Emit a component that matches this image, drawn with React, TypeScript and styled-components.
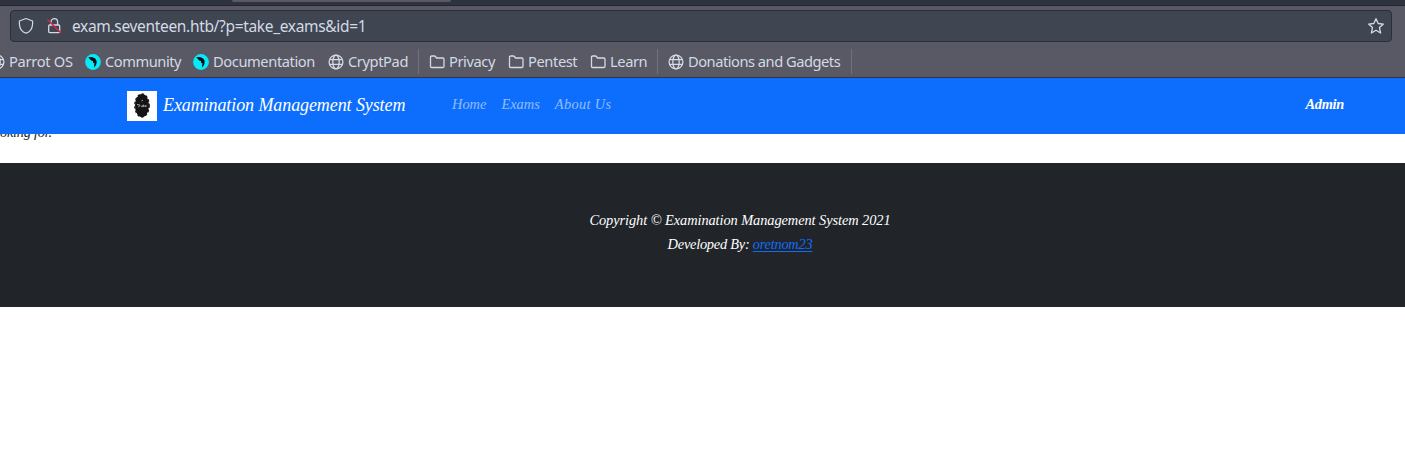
import React from "react";
import styled, { createGlobalStyle } from "styled-components";

const Global = createGlobalStyle`
  * { box-sizing: border-box; }
  html, body { margin: 0; background: #fff; overflow: hidden; }
`;

const Window = styled.div`
  display: flex;
  flex-direction: column;
  width: 1405px;
  height: 472px;
  overflow: hidden;
`;

const TabStrip = styled.div`
  flex: none;
  height: 6px;
  padding-left: 232px;
  background: #2f333f;
  border-bottom: 1px solid #22242e;
`;

const ActiveTab = styled.div`
  width: 219px;
  height: 2px;
  background: #585965;
  border-radius: 0 0 3px 3px;
`;

const Chrome = styled.div`
  flex: none;
  height: 72px;
  padding-top: 4px;
  background: #585965;
  border-bottom: 1px solid #32333e;
  color: #d3dae3;
  font-family: "Noto Sans", sans-serif;
`;

const AddressBar = styled.div`
  display: flex;
  align-items: center;
  height: 32px;
  margin: 0 13px 0 10px;
  padding: 0 6px 0 7px;
  background: #404552;
  border: 1px solid #2b2e39;
  border-radius: 4px;

  svg { flex: none; }
`;

const Url = styled.span`
  flex: 1;
  margin-left: 10px;
  font-size: 15.5px;
  line-height: 30px;
  letter-spacing: -0.33px;
`;

const Bookmarks = styled.div`
  display: flex;
  align-items: center;
  height: 35px;
  padding-top: 4px;
  margin-left: -11px;
`;

const Bookmark = styled.div<{ $width: number; $spacing?: number }>`
  display: flex;
  flex: none;
  align-items: center;
  gap: 4px;
  width: ${(p) => p.$width}px;
  font-size: 14.67px;
  line-height: 20px;
  letter-spacing: ${(p) => p.$spacing ?? -0.4}px;
  white-space: nowrap;

  svg { flex: none; }
`;

const Label = styled.span`
  padding-bottom: 1px;
`;

const Separator = styled.div<{ $after: number }>`
  flex: none;
  width: 1px;
  height: 25px;
  margin-right: ${(p) => p.$after}px;
  background: #6f717c;
`;

const Navbar = styled.nav`
  display: flex;
  flex: none;
  align-items: center;
  height: 56px;
  padding: 0 61px 0 127px;
  background: #0d6efd;
  color: #fff;
  font: italic 14.4px/24px "Z003", "Liberation Serif", serif;
`;

const Brand = styled.div`
  display: flex;
  align-items: center;
  gap: 6px;
  width: 325px;
  font-size: 18px;
  letter-spacing: -0.09px;
  white-space: nowrap;
`;

const BrandName = styled.span`
  padding-bottom: 3px;
`;

const NavLinks = styled.div`
  display: flex;
  flex: 1;
  gap: 15px;
  padding-bottom: 4px;
  color: rgba(255, 255, 255, 0.55);
`;

const NavLink = styled.span<{ $spacing?: number }>`
  letter-spacing: ${(p) => p.$spacing ?? 0}px;
`;

const User = styled.span`
  padding-bottom: 4px;
  font-weight: bold;
  letter-spacing: -0.3px;
`;

const Content = styled.main`
  flex: none;
  height: 29px;
  overflow: hidden;
  color: #212529;
  font: italic 14.4px/24px "Z003", "Liberation Serif", serif;
`;

const Message = styled.p`
  margin: -14px 0 0;
  letter-spacing: -0.25px;
  white-space: nowrap;
`;

const Footer = styled.footer`
  flex: none;
  height: 144px;
  padding: 45px 0 0 75px;
  background: #212529;
  color: #fff;
  text-align: center;
  font: italic 14.4px/24px "Z003", "Liberation Serif", serif;
`;

const FooterLine = styled.p<{ $spacing: number }>`
  margin: 0;
  letter-spacing: ${(p) => p.$spacing}px;
`;

const Author = styled.a`
  color: #0d6efd;
  text-decoration: underline;
  text-decoration-skip-ink: none;
  text-underline-offset: 2px;
`;

const Globe = () => (
  <svg width="16" height="16" viewBox="0 0 16 16" fill="none" stroke="currentColor" strokeWidth="1.3">
    <circle cx="8" cy="8" r="6.9" />
    <ellipse cx="8" cy="8" rx="3.2" ry="6.9" />
    <path d="M1.6 5.7h12.8M1.6 10.3h12.8" />
  </svg>
);

const Folder = () => (
  <svg width="16" height="16" viewBox="0 0 16 16" fill="none" stroke="currentColor" strokeWidth="1.3" strokeLinejoin="round">
    <path d="M1.5 12.5V3.2Q1.5 2 2.7 2h2.7q.6 0 1 .5L7.5 4h6.3Q15 4 15 5.2v7.1q0 1.2-1.2 1.2H2.7Q1.500 13.500 1.500 12.500Z" />
  </svg>
);

const Parrot = () => (
  <svg width="16" height="16" viewBox="0 0 16 16">
    <circle cx="8" cy="8" r="7.9" fill="#05eaf8" />
    <path d="M3.200 3.200 7 3.100q3.800 1 4.700 4.200l-.3 2.700-2 3.700-.3-2.400.5-1.700-1.500-.8-.2-1.800-1.700-.4Z" fill="#080d13" />
  </svg>
);

const Shield = () => (
  <svg width="16" height="18" viewBox="0 0 16 18" fill="none" stroke="currentColor" strokeWidth="1.2" strokeLinejoin="round">
    <path d="M8 1.5 14.6 4q.3 6.5-2.2 9.4Q10.4 15.700 8 16.200 5.600 15.700 3.600 13.400 1.100 10.500 1.400 4Z" />
  </svg>
);

const CrossedLock = () => (
  <svg width="16" height="18" viewBox="0 0 16 18" fill="none" stroke="currentColor" strokeWidth="1.3">
    <path d="M5 8V5a3.300 3.300 0 0 1 6.600 0V8" />
    <rect x="2.700" y="8" width="11" height="7.600" rx="1" />
    <path d="M1.500 2.500 14.800 15.800" stroke="#d7224b" strokeWidth="1.500" />
  </svg>
);

const Star = () => (
  <svg width="18" height="18" viewBox="0 0 18 18" fill="none" stroke="currentColor" strokeWidth="1.3" strokeLinejoin="round">
    <path d="m9 1.700 2.200 4.800 5.200.600-3.900 3.500 1.100 5.400L9 13.300 4.400 16l1.100-5.400L1.600 7.100l5.200-.600Z" />
  </svg>
);

const Logo = () => (
  <svg width="30" height="30" viewBox="0 0 30 30">
    <path d="M0 0h30v30H0z" fill="#fff" />
    <ellipse cx="15" cy="14.500" rx="7" ry="11.500" fill="#141414" />
    <ellipse cx="15" cy="14.500" rx="7.200" ry="11.500" fill="none" stroke="#141414" strokeWidth="1.300" strokeDasharray="2.400 2" />
    <path d="m10 13.500 2.500.300-.8 2.500m2-1.500 1.500 1 1-2 .5 2 1.500-1.500.500 1.500 1-1.300M14.500 10l1.500-1" fill="none" stroke="#c9c9c9" strokeWidth=".8" />
  </svg>
);

const Gap = styled.span`
  flex: none;
  width: 12px;
`;

export default function App() {
  return (
    <>
      <Global />
      <Window>
        <TabStrip>
          <ActiveTab />
        </TabStrip>
        <Chrome>
          <AddressBar>
            <Shield />
            <Gap />
            <CrossedLock />
            <Url>exam.seventeen.htb/?p=take_exams&amp;id=1</Url>
            <Star />
          </AddressBar>
          <Bookmarks>
            <Bookmark $width={96} $spacing={-0.3}><Globe /><Label>Parrot OS</Label></Bookmark>
            <Bookmark $width={108} $spacing={-0.45}><Parrot /><Label>Community</Label></Bookmark>
            <Bookmark $width={135}><Parrot /><Label>Documentation</Label></Bookmark>
            <Bookmark $width={90}><Globe /><Label>CryptPad</Label></Bookmark>
            <Separator $after={10} />
            <Bookmark $width={79}><Folder /><Label>Privacy</Label></Bookmark>
            <Bookmark $width={82}><Folder /><Label>Pentest</Label></Bookmark>
            <Bookmark $width={67}><Folder /><Label>Learn</Label></Bookmark>
            <Separator $after={10} />
            <Bookmark $width={183} $spacing={-0.48}><Globe /><Label>Donations and Gadgets</Label></Bookmark>
            <Separator $after={0} />
          </Bookmarks>
        </Chrome>
        <Navbar>
          <Brand>
            <Logo />
            <BrandName>Examination Management System</BrandName>
          </Brand>
          <NavLinks>
            <NavLink>Home</NavLink>
            <NavLink>Exams</NavLink>
            <NavLink $spacing={0.35}>About Us</NavLink>
          </NavLinks>
          <User>Admin</User>
        </Navbar>
        <Content>
          <Message>oking for.</Message>
        </Content>
        <Footer>
          <FooterLine $spacing={-0.08}>Copyright © Examination Management System 2021</FooterLine>
          <FooterLine $spacing={-0.25}>
            Developed By: <Author>oretnom23</Author>
          </FooterLine>
        </Footer>
      </Window>
    </>
  );
}
